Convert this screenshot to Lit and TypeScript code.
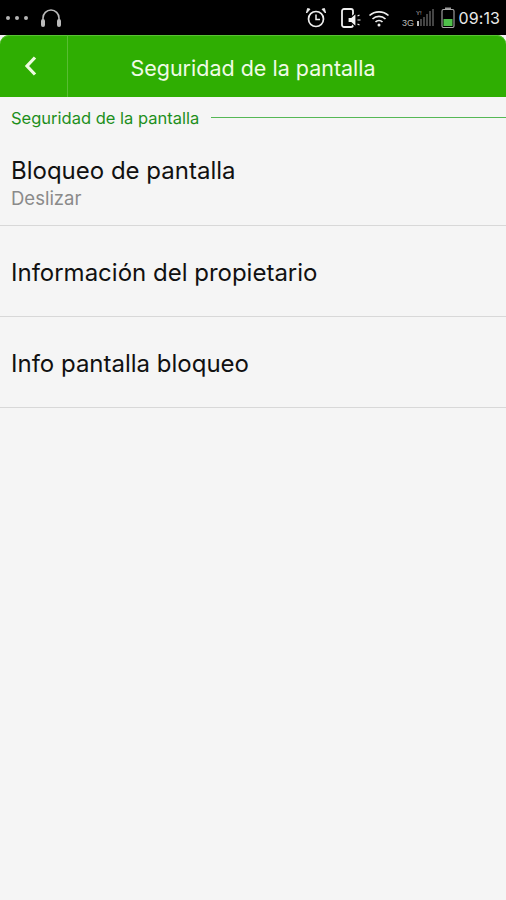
import { LitElement, html, css } from "lit";
import { customElement } from "lit/decorators.js";

@customElement("app-root")
export class AppRoot extends LitElement {
  static styles = css`
    :host { display: block; width: 506px; height: 900px; background: #f5f5f5; font-family: "Inter", "Open Sans", sans-serif; overflow: hidden; }
    .status { height: 35px; background: #000; display: flex; align-items: center; padding: 0 6px; box-sizing: border-box; color: #ddd; }
    .dots { display: flex; gap: 5px; margin-right: 12px; }
    .dots i { width: 4px; height: 4px; border-radius: 50%; background: #b5b5b5; display: block; }
    .spacer { flex: 1; }
    .right { display: flex; align-items: center; }
    .time { font-size: 16px; color: #e8e8e8; margin-left: 3px; letter-spacing: 0.1px; }
    svg { display: block; }
    .alarm { margin-right: 14px; }
    .phone { margin-right: 7px; }
    .wifi { margin-right: 11px; }
    .signal { margin-right: 7px; }
    .bar { height: 62px; background: #2fae02; border-radius: 9px 9px 0 0; display: flex; align-items: stretch; box-shadow: inset 0 1px 0 #58c334; }
    .back { width: 68px; border-right: 1px solid #58bd33; display: flex; align-items: center; padding-left: 24px; box-sizing: border-box; }
    .title { flex: 1; color: #f0fbe6; font-size: 21.5px; text-align: center; line-height: 66px; margin-right: 68px; white-space: nowrap; }
    .section { display: flex; align-items: center; height: 41px; padding-left: 11px; gap: 12px; }
    .section span { color: #1d8f1c; font-size: 16.5px; white-space: nowrap; }
    .section b { flex: 1; height: 1px; background: #55b855; }
    .row { box-sizing: border-box; padding-left: 11px; border-bottom: 1px solid #d8d8d8; display: flex; flex-direction: column; justify-content: center; }
    .r1 { height: 88px; padding-top: 2px; }
    .r2 { height: 91px; padding-top: 3px; }
    .main { color: #111; font-size: 24px; line-height: 30px; white-space: nowrap; }
    .sub { color: #8a8a8a; font-size: 18.5px; line-height: 24px; }
  `;

  render() {
    return html`
      <div class="status">
        <div class="dots"><i></i><i></i><i></i></div>
        <svg width="22" height="20" viewBox="0 0 22 20">
          <path d="M3 14V10a8 8 0 0 1 16 0v4" fill="none" stroke="#bbb" stroke-width="1.6"/>
          <rect x="1" y="11" width="4" height="8" rx="2" fill="#bbb"/>
          <rect x="17" y="11" width="4" height="8" rx="2" fill="#bbb"/>
        </svg>
        <div class="spacer"></div>
        <div class="right">
          <svg class="alarm" width="22" height="22" viewBox="0 0 22 22">
            <circle cx="11" cy="12" r="7.5" fill="none" stroke="#eee" stroke-width="1.7"/>
            <path d="M11 7.5V12.5H15" fill="none" stroke="#eee" stroke-width="1.5"/>
            <path d="M1.5 6 5 2.2 2.5 1.6ZM20.5 6 17 2.2 19.5 1.6Z" fill="#eee" stroke="#eee"/>
          </svg>
          <svg class="phone" width="20" height="20" viewBox="0 0 20 20">
            <rect x="1" y="1" width="11" height="18" rx="2" fill="#000" stroke="#eee" stroke-width="1.8"/>
            <path d="M7 9.5h3l5-4.5v14l-5-4.5H7Z" fill="#f2f2f2" stroke="#000" stroke-width="1.2"/>
            <path d="M16.5 8l2-1M16.5 12h3M16.5 16l2 1" stroke="#eee" stroke-width="1.2"/>
          </svg>
          <svg class="wifi" width="22" height="18" viewBox="0 0 22 18">
            <path d="M1.5 6.5a14 14 0 0 1 19 0M4.5 10a9.5 9.5 0 0 1 13 0M7.5 13a5 5 0 0 1 7 0" fill="none" stroke="#eee" stroke-width="1.7"/>
            <circle cx="11" cy="16" r="1.5" fill="#eee"/>
          </svg>
          <svg class="signal" width="33" height="20" viewBox="0 0 33 20">
            <text x="1" y="18" font-size="9" fill="#bbb" font-family="Liberation Sans">3G</text>
            <text x="15" y="7" font-size="6" fill="#bbb" font-family="Liberation Sans">Y!</text>
            <path d="M17 13v5M20 11v7M23 9v9M26 6v12M29 3v15M32 1v17" stroke="#555" stroke-width="1.6"/>
            <path d="M17 13v5" stroke="#ddd" stroke-width="1.6"/>
          </svg>
          <svg width="14" height="21" viewBox="0 0 14 21">
            <rect x="4" y="0.5" width="6" height="2" fill="#999"/>
            <rect x="1" y="2.5" width="12" height="18" rx="1.5" fill="none" stroke="#aaa" stroke-width="1.1"/>
            <rect x="2.5" y="12" width="9" height="7" fill="#4fc04a"/>
          </svg>
          <span class="time">09:13</span>
        </div>
      </div>
      <div class="bar">
        <div class="back">
          <svg width="14" height="22" viewBox="0 0 14 22"><path d="M11 2.5 3 11l8 8.5" fill="none" stroke="#eefbe0" stroke-width="3.2"/></svg>
        </div>
        <div class="title">Seguridad de la pantalla</div>
      </div>
      <div class="section"><span>Seguridad de la pantalla</span><b></b></div>
      <div class="row r1"><div class="main">Bloqueo de pantalla</div><div class="sub">Deslizar</div></div>
      <div class="row r2"><div class="main">Información del propietario</div></div>
      <div class="row r2"><div class="main">Info pantalla bloqueo</div></div>
    `;
  }
}
